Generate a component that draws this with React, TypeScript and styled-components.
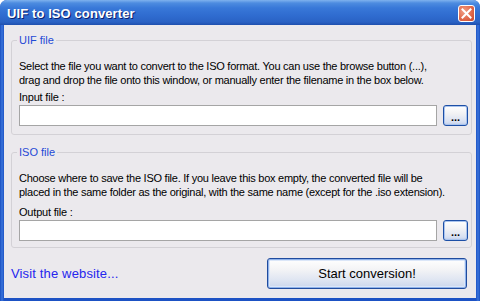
import React from "react";
import styled, { createGlobalStyle } from "styled-components";

const GlobalStyle = createGlobalStyle`
  html, body {
    margin: 0;
    padding: 0;
    background: #ffffff;
  }
  body {
    font-family: Tahoma, "Liberation Sans", Arial, sans-serif;
    font-size: 11px;
  }
`;

// Window frame

const Window = styled.div`
  width: 480px;
  height: 301px;
  display: flex;
  flex-direction: column;
  box-sizing: border-box;
  background: linear-gradient(to right, #1a4fc0 0px, #3a74dc 2px, #1d52c4 4px, #1d52c4 476px, #3a74dc 478px, #1a4fc0 480px);
  border-radius: 7px 7px 0 0;
  overflow: hidden;
`;

const TitleBar = styled.div`
  height: 25px;
  flex: none;
  display: flex;
  align-items: center;
  justify-content: space-between;
  padding: 1px 5px 0 7px;
  box-sizing: border-box;
  background: linear-gradient(
    to bottom,
    #7fb2ee 0px,
    #4d8ce0 3px,
    #3878d8 8px,
    #2f6bcf 16px,
    #2a62c4 22px,
    #1f4fae 25px
  );
`;

const Title = styled.div`
  color: #ffffff;
  font-family: "Liberation Sans", Arial, sans-serif;
  font-weight: bold;
  font-size: 13px;
  letter-spacing: 0.1px;
  text-shadow: 1px 1px 0 #0a1e6e;
`;

const CloseButton = styled.div`
  width: 17px;
  height: 17px;
  box-sizing: border-box;
  border: 1px solid #ffffff;
  border-radius: 3px;
  background: radial-gradient(circle at 35% 35%, #f0a088 0%, #e16a4c 55%, #c8462a 100%);
  display: flex;
  align-items: center;
  justify-content: center;
`;

const Client = styled.div`
  flex: 1;
  margin: 0 4px 3px 4px;
  background: #ebe9ed;
  display: flex;
  flex-direction: column;
  padding: 9px 4px 0 7px;
  box-sizing: border-box;
`;

// Group boxes

const Group = styled.fieldset<{ bottom: number }>`
  margin: 0;
  padding: 12px 3px ${(p) => p.bottom}px 7px;
  border: 1px solid #d3d1d6;
  border-radius: 3px;
  min-width: 0;
  & + & {
    margin-top: 11px;
  }
`;

const Legend = styled.legend`
  color: #1f4ad6;
  font-size: 11px;
  padding: 0 2px;
  margin-left: -2px;
  line-height: 13px;
`;

const Description = styled.div`
  color: #000000;
  line-height: 14px;
  white-space: nowrap;
  letter-spacing: -0.25px;
`;

const Label = styled.div<{ gap: number }>`
  color: #000000;
  line-height: 13px;
  letter-spacing: -0.2px;
  margin-top: ${(p) => p.gap}px;
`;

const FileRow = styled.div`
  display: flex;
  align-items: center;
  margin-top: 1px;
  gap: 6px;
`;

const FileInput = styled.input`
  flex: 1;
  height: 21px;
  box-sizing: border-box;
  border: 1px solid #a5a5a5;
  background: #ffffff;
  padding: 0 3px;
  font: inherit;
  outline: none;
`;

const BrowseButton = styled.button`
  width: 25px;
  height: 21px;
  flex: none;
  box-sizing: border-box;
  border: 1px solid #1d4fa6;
  border-radius: 3px;
  background: linear-gradient(to bottom, #ffffff 0%, #f2f2f4 40%, #d6dff2 85%, #bccbe8 100%);
  box-shadow: inset 0 0 0 1px #aac4ee;
  padding: 3px 0 0 0;
  font-family: "Liberation Sans", Arial, sans-serif;
  font-size: 11px;
  font-weight: bold;
  color: #000000;
  line-height: 1;
`;

// Bottom row

const Footer = styled.div`
  display: flex;
  align-items: center;
  justify-content: space-between;
  margin-top: 10px;
`;

const SiteLink = styled.a`
  color: #2626ee;
  font-family: "Liberation Sans", Arial, sans-serif;
  font-size: 13px;
  letter-spacing: 0.15px;
  text-decoration: none;
  cursor: pointer;
`;

const StartButton = styled.button`
  width: 200px;
  height: 31px;
  box-sizing: border-box;
  border: 1px solid #1f4b9e;
  border-radius: 3px;
  background: linear-gradient(to bottom, #ffffff 0%, #f4f4f6 35%, #e0e6f2 70%, #c9d5ec 100%);
  box-shadow: inset 0 0 0 1px #8fb2ea, inset 0 0 0 2px #dbe6f8;
  font-family: "Liberation Sans", Arial, sans-serif;
  font-size: 13px;
  color: #000000;
  margin-right: 5px;
`;

const App = () => {
  return (
    <>
      <GlobalStyle />
      <Window>
        <TitleBar>
          <Title>UIF to ISO converter</Title>
          <CloseButton>
            <svg width="11" height="11" viewBox="0 0 11 11">
              <path d="M1.5 1.5 L9.5 9.5 M9.5 1.5 L1.5 9.5" stroke="#ffffff" strokeWidth="2" strokeLinecap="square" />
            </svg>
          </CloseButton>
        </TitleBar>
        <Client>
          <Group bottom={8}>
            <Legend>UIF file</Legend>
            <Description>
              Select the file you want to convert to the ISO format. You can use the browse button (...),
              <br />
              drag and drop the file onto this window, or manually enter the filename in the box below.
            </Description>
            <Label gap={4}>Input file :</Label>
            <FileRow>
              <FileInput type="text" />
              <BrowseButton>...</BrowseButton>
            </FileRow>
          </Group>
          <Group bottom={6}>
            <Legend>ISO file</Legend>
            <Description>
              Choose where to save the ISO file. If you leave this box empty, the converted file will be
              <br />
              placed in the same folder as the original, with the same name (except for the .iso extension).
            </Description>
            <Label gap={7}>Output file :</Label>
            <FileRow>
              <FileInput type="text" />
              <BrowseButton>...</BrowseButton>
            </FileRow>
          </Group>
          <Footer>
            <SiteLink>Visit the website...</SiteLink>
            <StartButton>Start conversion!</StartButton>
          </Footer>
        </Client>
      </Window>
    </>
  );
};

export default App;
